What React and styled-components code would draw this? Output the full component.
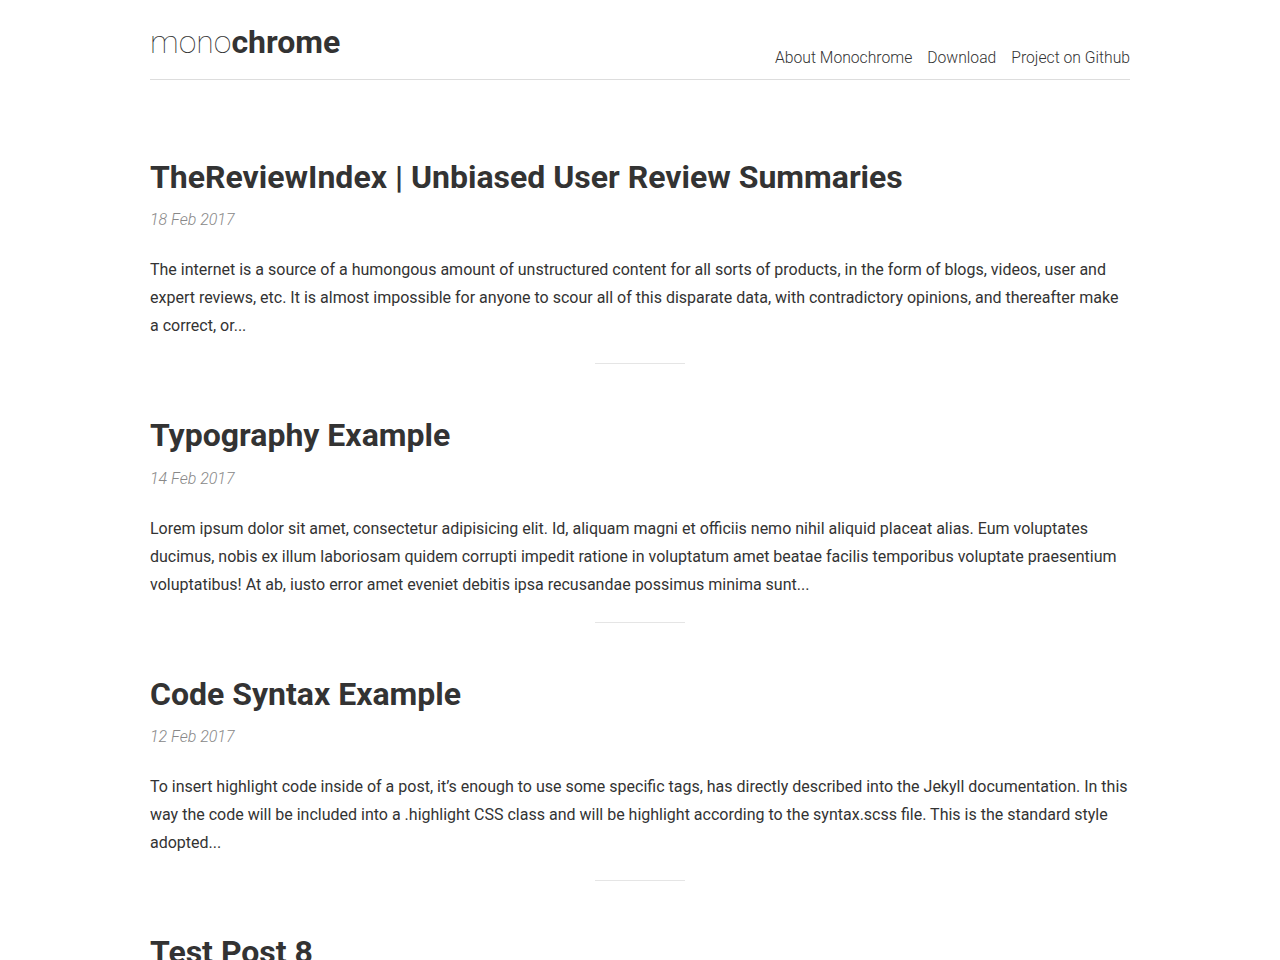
import styled, { createGlobalStyle } from 'styled-components';

const GlobalStyle = createGlobalStyle`
  body {
    margin: 0;
    background: #fff;
    font-family: Roboto, "Liberation Sans", sans-serif;
    color: #333;
  }
`;

const Wrapper = styled.div`
  width: 980px;
  margin: 0 auto;
`;

const Header = styled.header`
  display: flex;
  justify-content: space-between;
  align-items: flex-start;
  padding: 23px 0 11px;
  border-bottom: 1px solid #ddd;
`;

const Logo = styled.a`
  font-size: 32px;
  line-height: 1.2;
  color: #333;
  text-decoration: none;
`;

const LogoLight = styled.span`
  font-weight: 100;
  color: #333;
`;

const LogoBold = styled.span`
  font-weight: 700;
`;

const Nav = styled.nav`
  display: flex;
  gap: 15px;
  margin-top: 25px;
`;

const NavLink = styled.a`
  font-size: 15.7px;
  font-weight: 300;
  color: #333;
  text-decoration: none;
  line-height: 20px;
`;

const PostList = styled.main`
  padding-top: 78px;
`;

const Post = styled.article`
  display: flex;
  flex-direction: column;
`;

const Title = styled.h2`
  margin: 0;
  font-size: 32px;
  font-weight: 700;
  line-height: 1.2;
  color: #333;
`;

const Date = styled.time`
  margin-top: 10px;
  font-size: 16px;
  font-weight: 300;
  font-style: italic;
  color: #888;
  line-height: 28px;
`;

const Excerpt = styled.p`
  margin: 22px 0 0;
  font-size: 16px;
  line-height: 28px;
  color: #333;
`;

const Divider = styled.hr`
  width: 90px;
  margin: 23px auto 52px;
  border: 0;
  border-top: 1px solid #e5e5e5;
`;

const posts = [
  {
    title: 'TheReviewIndex | Unbiased User Review Summaries',
    date: '18 Feb 2017',
    excerpt:
      'The internet is a source of a humongous amount of unstructured content for all sorts of products, in the form of blogs, videos, user and expert reviews, etc. It is almost impossible for anyone to scour all of this disparate data, with contradictory opinions, and thereafter make a correct, or...',
  },
  {
    title: 'Typography Example',
    date: '14 Feb 2017',
    excerpt:
      'Lorem ipsum dolor sit amet, consectetur adipisicing elit. Id, aliquam magni et officiis nemo nihil aliquid placeat alias. Eum voluptates ducimus, nobis ex illum laboriosam quidem corrupti impedit ratione in voluptatum amet beatae facilis temporibus voluptate praesentium voluptatibus! At ab, iusto error amet eveniet debitis ipsa recusandae possimus minima sunt...',
  },
  {
    title: 'Code Syntax Example',
    date: '12 Feb 2017',
    excerpt:
      'To insert highlight code inside of a post, it’s enough to use some specific tags, has directly described into the Jekyll documentation. In this way the code will be included into a .highlight CSS class and will be highlight according to the syntax.scss file. This is the standard style adopted...',
  },
  {
    title: 'Test Post 8',
    date: '10 Feb 2017',
    excerpt:
      'Lorem ipsum dolor sit amet, consectetur adipisicing elit. Id, aliquam magni et officiis nemo nihil aliquid placeat alias. Eum voluptates ducimus, nobis ex illum laboriosam quidem corrupti impedit ratione in voluptatum amet beatae facilis temporibus...',
  },
];

export default function App() {
  return (
    <>
      <GlobalStyle />
      <Wrapper>
        <Header>
          <Logo href="#">
            <LogoLight>mono</LogoLight>
            <LogoBold>chrome</LogoBold>
          </Logo>
          <Nav>
            <NavLink href="#">About Monochrome</NavLink>
            <NavLink href="#">Download</NavLink>
            <NavLink href="#">Project on Github</NavLink>
          </Nav>
        </Header>
        <PostList>
          {posts.map((p) => (
            <Post key={p.title}>
              <Title>{p.title}</Title>
              <Date>{p.date}</Date>
              <Excerpt>{p.excerpt}</Excerpt>
              <Divider />
            </Post>
          ))}
        </PostList>
      </Wrapper>
    </>
  );
}
